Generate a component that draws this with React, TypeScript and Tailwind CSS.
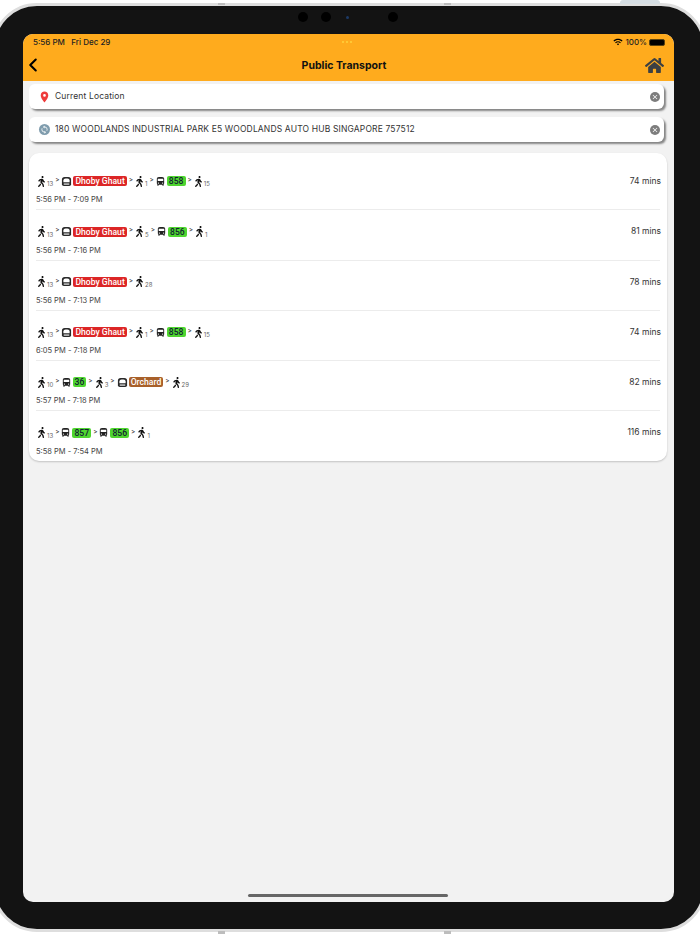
import { MdDirectionsBus, MdLocationOn, MdSync, MdClose, MdWifi } from "react-icons/md";
import { FaHome, FaWalking } from "react-icons/fa";
import { ChevronLeft } from "lucide-react";

type Seg = { t: "w"; n: number } | { t: "b"; n: string } | { t: "m"; n: string; c: string };
const R = "bg-[#dc2626]";
const B = "bg-[#a8602a]";
const rows: { segs: Seg[]; time: string; dur: string }[] = [
  { segs: [{ t: "w", n: 13 }, { t: "m", n: "Dhoby Ghaut", c: R }, { t: "w", n: 1 }, { t: "b", n: "858" }, { t: "w", n: 15 }], time: "5:56 PM - 7:09 PM", dur: "74 mins" },
  { segs: [{ t: "w", n: 13 }, { t: "m", n: "Dhoby Ghaut", c: R }, { t: "w", n: 5 }, { t: "b", n: "856" }, { t: "w", n: 1 }], time: "5:56 PM - 7:16 PM", dur: "81 mins" },
  { segs: [{ t: "w", n: 13 }, { t: "m", n: "Dhoby Ghaut", c: R }, { t: "w", n: 28 }], time: "5:56 PM - 7:13 PM", dur: "78 mins" },
  { segs: [{ t: "w", n: 13 }, { t: "m", n: "Dhoby Ghaut", c: R }, { t: "w", n: 1 }, { t: "b", n: "858" }, { t: "w", n: 15 }], time: "6:05 PM - 7:18 PM", dur: "74 mins" },
  { segs: [{ t: "w", n: 10 }, { t: "b", n: "36" }, { t: "w", n: 3 }, { t: "m", n: "Orchard", c: B }, { t: "w", n: 29 }], time: "5:57 PM - 7:18 PM", dur: "82 mins" },
  { segs: [{ t: "w", n: 13 }, { t: "b", n: "857" }, { t: "b", n: "856" }, { t: "w", n: 1 }], time: "5:58 PM - 7:54 PM", dur: "116 mins" },
];

function Sep() {
  return <span className="text-[6.5px] leading-none text-[#333] ml-[2px] mr-[2px] -mt-[2px]">&gt;</span>;
}

function SubwayIcon() {
  return (
    <svg viewBox="0 0 12 12" className="w-[11px] h-[11px]">
      <path d="M1 4 Q1 1 4 1 H8 Q11 1 11 4 V9 Q11 11 9 11 H3 Q1 11 1 9 Z" fill="#2a2a2a" />
      <path d="M2.6 5 Q2.6 2.6 5 2.6 H7 Q9.4 2.6 9.4 5 V6.8 H2.6 Z" fill="#fff" />
      <rect x="3" y="8.2" width="6" height="1.2" fill="#fff" />
    </svg>
  );
}

const badge = "ml-[1px] rounded-[2px] text-[8.6px] font-medium font-['Roboto',sans-serif] leading-[10px] h-[10px] px-[2px]";

function SegView({ s }: { s: Seg }) {
  if (s.t === "w")
    return (
      <span className="flex items-center">
        <FaWalking className="text-[#111] w-[7px] h-[11px] ml-[1px]" />
        <span className="text-[6px] leading-none text-[#666] ml-[2px] mt-[6px]">{s.n}</span>
      </span>
    );
  if (s.t === "b")
    return (
      <span className="flex items-center">
        <MdDirectionsBus className="text-[#222] w-[11px] h-[11px] -ml-[1px]" />
        <span className={`${badge} bg-[#4fd52f] text-[#123]`}>{s.n}</span>
      </span>
    );
  return (
    <span className="flex items-center">
      <SubwayIcon />
      <span className={`${badge} ${s.c} text-white`}>{s.n}</span>
    </span>
  );
}

function SearchBox({ icon, text }: { icon: React.ReactNode; text: string }) {
  return (
    <div className="flex items-center h-[25px] w-[635px] bg-white rounded-[6px] shadow-[2px_2px_2px_rgba(0,0,0,0.45)] pl-[9px] pr-[4px]">
      <span className="w-[13px] flex justify-center">{icon}</span>
      <span className="ml-[4px] flex-1 text-[8.5px] text-[#333] tracking-[0.15px]">{text}</span>
      <span className="w-[10px] h-[10px] rounded-full bg-[#7d7d7d] flex items-center justify-center">
        <MdClose className="text-white w-[8px] h-[8px]" />
      </span>
    </div>
  );
}

export default function App() {
  return (
    <div className="relative w-[700px] h-[934px] bg-white overflow-hidden pt-[3px] font-['Inter','Liberation_Sans',sans-serif]">
      <div className="absolute left-[218px] top-[3px] w-[7px] h-[2px] bg-[#bdbdbd]" />
      <div className="absolute left-[444px] top-[3px] w-[7px] h-[2px] bg-[#bdbdbd]" />
      <div className="absolute left-[620px] top-0 w-[40px] h-[4px] rounded-t-[3px] bg-[#d5dde3]" />
      <div className="absolute left-[218px] top-[931px] w-[7px] h-[3px] bg-[#bdbdbd]" />
      <div className="absolute left-[444px] top-[931px] w-[7px] h-[3px] bg-[#bdbdbd]" />
      <div className="-ml-[8px] w-[714px] h-[929px] rounded-[45px] bg-[#131313] border-[3px] border-[#dedede] pt-[28px] pl-[28px]">
        <div className="absolute left-[298px] top-[12px] w-[10px] h-[10px] rounded-full bg-black" />
        <div className="absolute left-[321px] top-[12px] w-[10px] h-[10px] rounded-full bg-black" />
        <div className="absolute left-[346px] top-[16px] w-[3px] h-[3px] rounded-full bg-[#1c3a66]" />
        <div className="absolute left-[388px] top-[12px] w-[10px] h-[10px] rounded-full bg-black" />
        <div className="w-[651px] h-[868px] bg-[#f2f2f2] rounded-[10px] overflow-hidden flex flex-col">
          <div className="bg-[#ffab1d] h-[47px] shrink-0 flex flex-col relative">
            <div className="absolute left-[319px] top-[7px] flex gap-[2px]">
              <span className="w-[2px] h-[2px] rounded-full bg-[#ffd23c]" />
              <span className="w-[2px] h-[2px] rounded-full bg-[#ffd23c]" />
              <span className="w-[2px] h-[2px] rounded-full bg-[#ffd23c]" />
            </div>
            <div className="flex justify-between items-center h-[15px] pl-[10px] pr-[9px] pt-[1px] text-[8px] font-medium text-[#222]">
              <span>5:56 PM&nbsp;&nbsp;&nbsp;Fri Dec 29</span>
              <span className="flex items-center gap-[2px]">
                <MdWifi className="w-[10px] h-[10px] text-black" />
                <span>100%</span>
                <span className="w-[16px] h-[7px] bg-black rounded-[2px] border border-[#5a4310]" />
              </span>
            </div>
            <div className="flex items-center justify-between flex-1 -ml-[1px] pr-[10px]">
              <ChevronLeft className="w-[22px] h-[22px] text-black" strokeWidth={2.3} />
              <span className="text-[10.5px] font-bold text-[#111] pr-[1px] pt-[1px]">Public Transport</span>
              <FaHome className="w-[19px] h-[17px] text-[#3c4043]" />
            </div>
          </div>
          <div className="flex flex-col gap-[8px] pl-[6px] pt-[3px]">
            <SearchBox icon={<MdLocationOn className="w-[14px] h-[14px] text-[#ee3b3b]" />} text="Current Location" />
            <SearchBox
              icon={
                <span className="w-[11px] h-[11px] rounded-full bg-[#7f9cad] flex items-center justify-center">
                  <MdSync className="w-[9px] h-[9px] text-white" />
                </span>
              }
              text="180 WOODLANDS INDUSTRIAL PARK E5 WOODLANDS AUTO HUB SINGAPORE 757512"
            />
          </div>
          <div className="ml-[6px] mt-[11px] w-[638px] h-[308px] bg-white rounded-[10px] shadow-[0_1px_2px_rgba(0,0,0,0.2)] pt-[7px] px-[7px]">
            {rows.map((r, i) => (
              <div key={i} className={`h-[50.3px] flex flex-col justify-end pb-[4px] border-b ${i < 5 ? "border-[#ececec]" : "border-transparent"}`}>
                <div className="flex items-center justify-between h-[14px] mb-[7px]">
                  <div className="flex items-center ml-[1px]">
                    {r.segs.map((s, j) => (
                      <span key={j} className="flex items-center">
                        {j > 0 && <Sep />}
                        <SegView s={s} />
                      </span>
                    ))}
                  </div>
                  <span className="text-[8.5px] text-[#333] mr-[-1px]">{r.dur}</span>
                </div>
                <div className="text-[7.5px] leading-[10px] text-[#444]">{r.time}</div>
              </div>
            ))}
          </div>
          <div className="flex-1 flex items-end justify-center pb-[5px] pr-[1px]">
            <div className="w-[200px] h-[3px] rounded-full bg-[#666]" />
          </div>
        </div>
      </div>
    </div>
  );
}
